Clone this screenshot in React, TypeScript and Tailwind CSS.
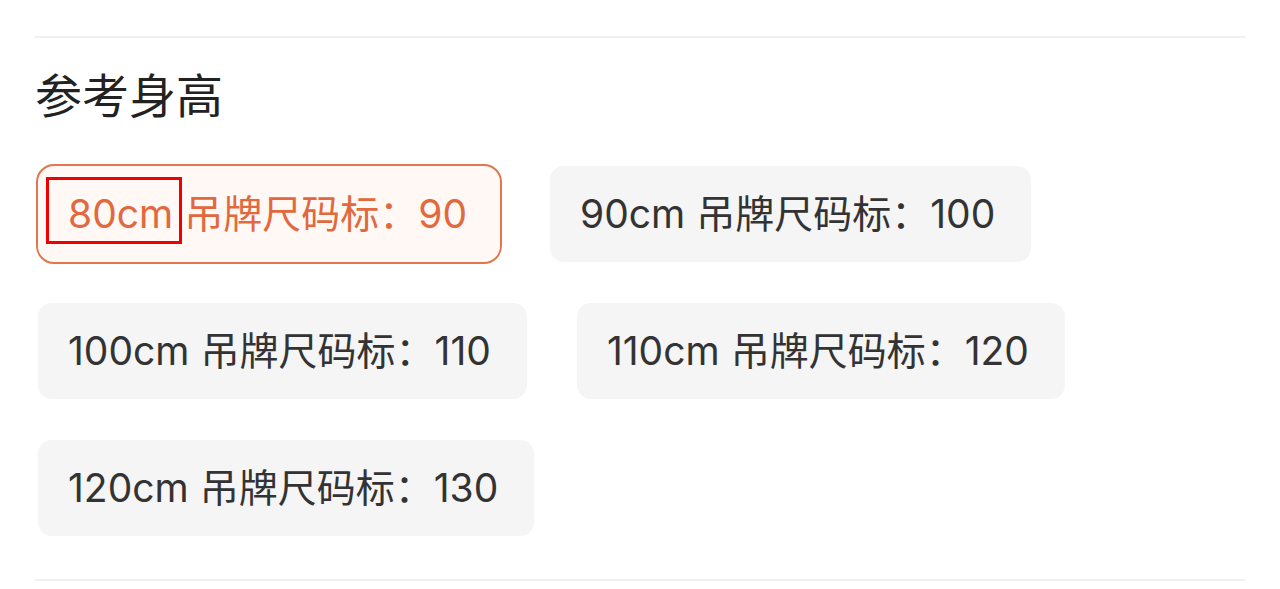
import React from "react";

const sizes = [
  { height: "80cm", tag: "90" },
  { height: "90cm", tag: "100" },
  { height: "100cm", tag: "110" },
  { height: "110cm", tag: "120" },
  { height: "120cm", tag: "130" },
];

export default function App() {
  const selected = 0;

  return (
    <div
      className="w-[1280px] h-[589px] overflow-hidden bg-white px-[35px] pt-[36px]"
      style={{ fontFamily: 'Inter, "Noto Sans CJK SC", sans-serif' }}
    >
      <div className="h-[2px] bg-[#f0f0f0]" />

      <h2 className="mt-[34px] text-[47px] leading-none text-[#222]">参考身高</h2>

      <div className="mt-[47px] flex flex-wrap gap-x-[50px] gap-y-[41px] pl-[3px]">
        {sizes.map((s, i) => {
          const active = i === selected;
          return (
            <div
              key={s.height}
              className={
                active
                  ? "relative flex h-[96px] items-center rounded-[16px] bg-[#fff8f5] pl-[30px] pr-[33px] text-[39px] text-[#e2693d] outline-2 outline-[#e2764c]"
                  : "flex h-[96px] items-center rounded-[14px] bg-[#f5f5f5] pl-[30px] pr-[36px] text-[39px] text-[#333]"
              }
            >
              <span>{s.height}</span>
              <span className="ml-[11px]">吊牌尺码标：{s.tag}</span>
              {active && (
                <div className="absolute left-[8px] top-[11px] h-[67px] w-[136px] border-[3px] border-[#f00000]" />
              )}
            </div>
          );
        })}
      </div>

      <div className="mt-[43px] h-[2px] bg-[#f0f0f0]" />
    </div>
  );
}
